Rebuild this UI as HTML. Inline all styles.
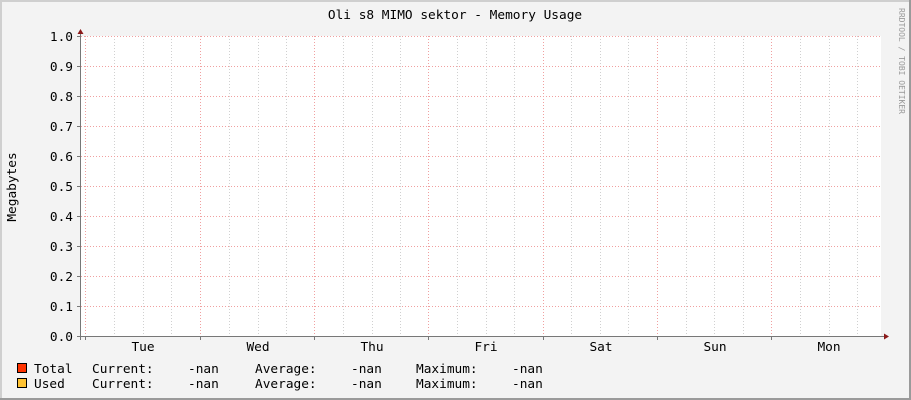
<!DOCTYPE html><html><head><style>html,body{margin:0;padding:0;background:#f3f3f3}svg{display:block}text{font-family:"DejaVu Sans Mono","Liberation Mono",monospace;fill:#000}</style></head><body>
<svg width="911" height="400" xmlns="http://www.w3.org/2000/svg">
<rect x="0" y="0" width="911" height="400" fill="#f3f3f3"/>
<rect x="0" y="0" width="911" height="2" fill="#cfcfcf"/>
<rect x="0" y="0" width="2" height="400" fill="#cfcfcf"/>
<rect x="0" y="398" width="911" height="2" fill="#9a9a9a"/>
<rect x="909" y="0" width="2" height="400" fill="#9a9a9a"/>
<rect x="81" y="36" width="800" height="300" fill="#fff"/>
<g stroke="#d0d0d0" stroke-width="1" stroke-dasharray="1,2">
<path d="M114.5 36V336M143.5 36V336M171.5 36V336M229.5 36V336M258.5 36V336M286.5 36V336M343.5 36V336M372.5 36V336M400.5 36V336M457.5 36V336M486.5 36V336M514.5 36V336M571.5 36V336M600.5 36V336M628.5 36V336M686.5 36V336M714.5 36V336M743.5 36V336M800.5 36V336M829.5 36V336M857.5 36V336"/>
</g>
<g stroke="#f0a0a0" stroke-width="1" stroke-dasharray="1,2">
<path d="M85.5 36V336M200.5 36V336M314.5 36V336M428.5 36V336M543.5 36V336M657.5 36V336M771.5 36V336"/>
<path d="M81 36.5H881M81 66.5H881M81 96.5H881M81 126.5H881M81 156.5H881M81 186.5H881M81 216.5H881M81 246.5H881M81 276.5H881M81 306.5H881"/>
</g>
<g stroke="#777" stroke-width="1">
<path d="M80.5 32V340M77 336.5H884M85.5 336V340M200.5 336V340M314.5 336V340M428.5 336V340M543.5 336V340M657.5 336V340M771.5 336V340M77 36.5H81M77 66.5H81M77 96.5H81M77 126.5H81M77 156.5H81M77 186.5H81M77 216.5H81M77 246.5H81M77 276.5H81M77 306.5H81"/>
</g>
<path d="M77.5 34L80.5 29L83.5 34Z" fill="#8b1a1a"/>
<path d="M884 333.5L889 336.5L884 339.5Z" fill="#8b1a1a"/>
<g font-size="12.8" text-anchor="end">
<text x="73" y="41">1.0</text><text x="73" y="71">0.9</text><text x="73" y="101">0.8</text><text x="73" y="131">0.7</text><text x="73" y="161">0.6</text><text x="73" y="191">0.5</text><text x="73" y="221">0.4</text><text x="73" y="251">0.3</text><text x="73" y="281">0.2</text><text x="73" y="311">0.1</text><text x="73" y="341">0.0</text>
</g>
<g font-size="12.8" text-anchor="middle">
<text x="455" y="19">Oli s8 MIMO sektor - Memory Usage</text>
<text x="143" y="351">Tue</text><text x="258" y="351">Wed</text><text x="372" y="351">Thu</text><text x="486" y="351">Fri</text><text x="601" y="351">Sat</text><text x="715" y="351">Sun</text><text x="829" y="351">Mon</text>
<text transform="translate(16,187) rotate(-90)">Megabytes</text>
</g>
<text transform="translate(899,61) rotate(90)" font-size="8" text-anchor="middle" style="fill:#999">RRDTOOL / TOBI OETIKER</text>
<rect x="17.5" y="363.5" width="9" height="9" fill="#ff3300" stroke="#000"/>
<rect x="17.5" y="378.5" width="9" height="9" fill="#ffc333" stroke="#000"/>
<g font-size="12.8">
<text x="34" y="373">Total</text><text x="92" y="373">Current:</text><text x="188" y="373">-nan</text><text x="255" y="373">Average:</text><text x="351" y="373">-nan</text><text x="416" y="373">Maximum:</text><text x="512" y="373">-nan</text>
<text x="34" y="388">Used</text><text x="92" y="388">Current:</text><text x="188" y="388">-nan</text><text x="255" y="388">Average:</text><text x="351" y="388">-nan</text><text x="416" y="388">Maximum:</text><text x="512" y="388">-nan</text>
</g>
</svg>
</body></html>
